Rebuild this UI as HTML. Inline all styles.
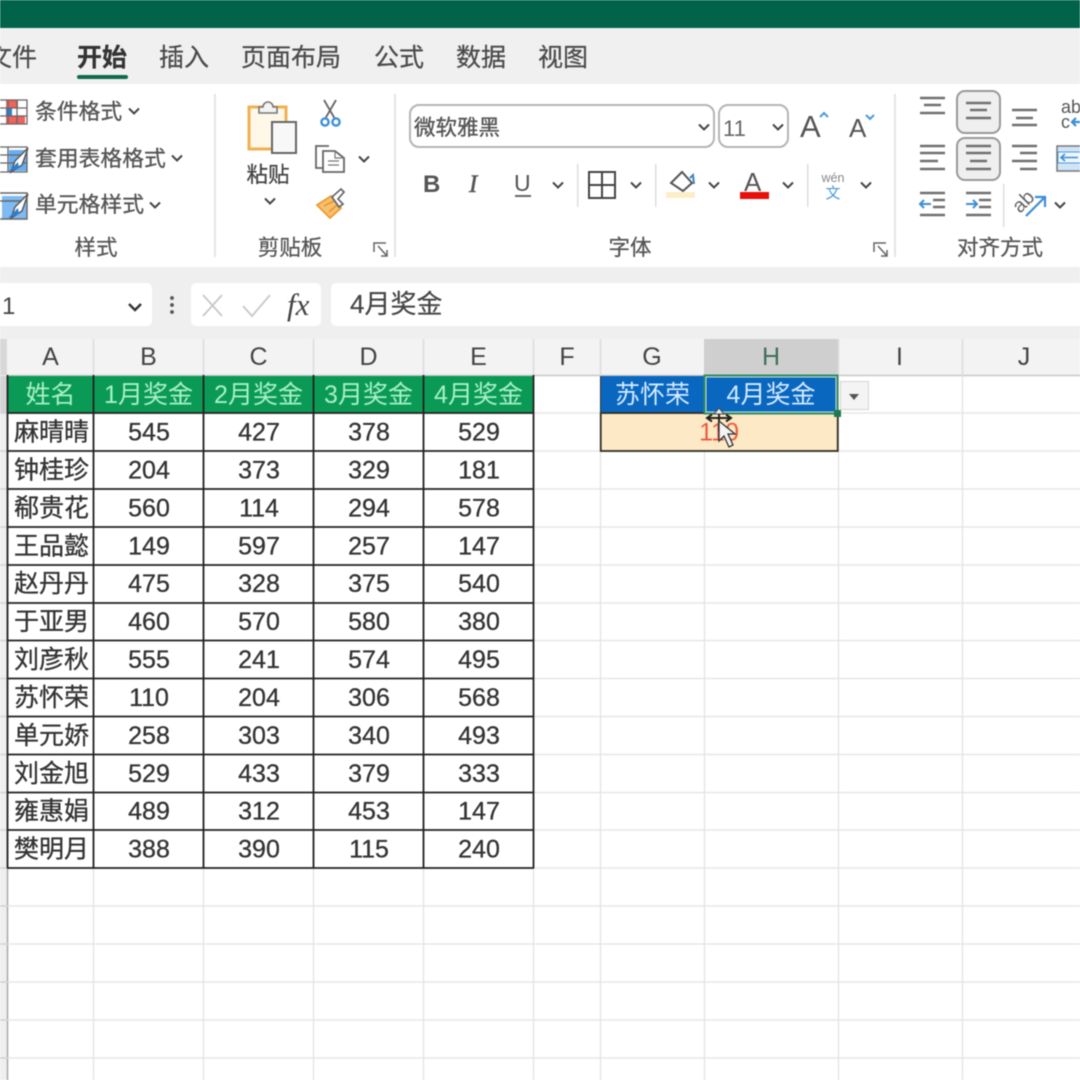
<!DOCTYPE html>
<html lang="zh-CN"><head><meta charset="utf-8"><title>Excel</title>
<style>
html,body{margin:0;padding:0;width:1080px;height:1080px;overflow:hidden;background:#fff}
svg{display:block;filter:blur(.55px)}
text{font-family:"Liberation Sans","Noto Sans CJK SC",sans-serif}
.tab{font-size:25px;fill:#4a4a4a;stroke:#4a4a4a;stroke-width:.25}
.rb{font-size:21.8px;fill:#555;stroke:#555;stroke-width:.3}
.grp{font-size:21.500px;fill:#555;stroke:#555;stroke-width:.25;text-anchor:middle}
.col{font-size:25px;fill:#444;text-anchor:middle}
.n{font-size:25px;fill:#333;stroke:#333;stroke-width:.3;text-anchor:middle}
.h{font-size:25px;fill:#a8f0c8;text-anchor:middle}
.w{font-size:25px;fill:#d4ebff;text-anchor:middle}
.ch{fill:none;stroke:#444;stroke-width:2}
.bar{stroke:#707070;stroke-width:2.4}
</style></head><body>
<svg width="1080" height="1080" viewBox="0 0 1080 1080" xmlns="http://www.w3.org/2000/svg">
<defs><path id="c" class="ch" d="M-5-2.5 0 2.5 5-2.5"/></defs>
<rect width="1080" height="1080" fill="#fff"/>
<!-- title / tabs -->
<rect width="1080" height="28" fill="#01634a"/>
<rect y="28" width="1080" height="56" fill="#f0f0f0"/>
<text class="tab" x="-13" y="66">文件</text>
<text class="tab" x="77" y="66" style="font-weight:700;fill:#333;stroke:#333">开始</text>
<rect x="77" y="75" width="51" height="4" rx="2" fill="#0f6b4e"/>
<text class="tab" x="159" y="66">插入</text>
<text class="tab" x="241" y="66">页面布局</text>
<text class="tab" x="374" y="66">公式</text>
<text class="tab" x="456" y="66">数据</text>
<text class="tab" x="538" y="66">视图</text>
<!-- ribbon -->
<rect y="84" width="1080" height="183" fill="#fff"/>
<g fill="#e4e4e4"><rect x="214" y="94" width="2" height="163"/><rect x="394" y="94" width="2" height="163"/><rect x="894" y="94" width="2" height="163"/></g>
<!-- styles -->
<g>
<rect x="0" y="100" width="27" height="24" fill="#fff"/>
<rect x="6" y="100" width="12" height="8" fill="#f0625a"/><rect x="6" y="116" width="19" height="8" fill="#f0625a"/><rect x="6" y="108" width="6" height="8" fill="#2f7fd0"/>
<path d="M-1 100H27V124H-1M8 100V124M17 100V124M-1 108H27M-1 116H27" fill="none" stroke="#666" stroke-width="1.3"/>
<rect x="9" y="150" width="18" height="21" fill="#6aaef0"/>
<path d="M-1 147H27V172H-1M8 147V172M-1 155H27M-1 163H27" fill="none" stroke="#666" stroke-width="1.3"/>
<path d="M28 148 15 161 11 172 22 165Z" fill="#fff" stroke="#555" stroke-width="1.4"/><path d="M18 162 8 172 19 168Z" fill="#2f7fd0"/>
<rect x="2" y="196" width="25" height="23" fill="#7fbaf3"/>
<path d="M-1 193H27V219H-1M-1 201H27" fill="none" stroke="#666" stroke-width="1.4"/>
<path d="M28 194 15 207 11 218 22 211Z" fill="#fff" stroke="#555" stroke-width="1.4"/><path d="M18 208 8 218 19 214Z" fill="#2f7fd0"/>
</g>
<text class="rb" x="35" y="119">条件格式</text><use href="#c" x="134" y="111"/>
<text class="rb" x="35" y="166">套用表格格式</text><use href="#c" x="177" y="158"/>
<text class="rb" x="35" y="212">单元格样式</text><use href="#c" x="155" y="205"/>
<text class="grp" x="96" y="255">样式</text>
<!-- clipboard -->
<rect x="249" y="107" width="37" height="42" fill="#fff7e8" stroke="#f2b050" stroke-width="3"/>
<path d="M259 113V107H263A5 5 0 0 1 273 107H277V113Z" fill="#f4f4f4" stroke="#777" stroke-width="1.6"/>
<rect x="272" y="122" width="24" height="31" fill="#f8f8f8" stroke="#666" stroke-width="2"/>
<text class="grp" x="268" y="182" style="fill:#444;stroke:#444">粘贴</text><use href="#c" x="270" y="201"/>
<path d="M324 100 335 119M336 100 325 119" stroke="#666" stroke-width="1.8"/>
<circle cx="325" cy="122" r="3.6" fill="none" stroke="#3d8fd8" stroke-width="2.4"/><circle cx="336" cy="122" r="3.6" fill="none" stroke="#3d8fd8" stroke-width="2.4"/>
<path d="M328 168H316V146H329" fill="none" stroke="#666" stroke-width="1.8"/>
<path d="M323 151H335L344 158V172H323Z" fill="#fff" stroke="#666" stroke-width="1.8"/><path d="M328 161H339M328 165H339M335 151V158H344" fill="none" stroke="#777" stroke-width="1.2"/>
<use href="#c" x="364" y="159"/>
<path d="M317 205 331 196 341 208 330 218Z" fill="#f6c070" stroke="#ee9a2e" stroke-width="1.8"/><path d="M324 206 334 201M329 212 337 205" stroke="#e89020" stroke-width="1.4"/>
<path d="M332 197 341 189 344 192 338 199 343 204 339 207Z" fill="#fff" stroke="#666" stroke-width="1.700"/>
<text class="grp" x="290" y="255">剪贴板</text>
<path d="M374 252V243H386M378 246 387 256M387 250V256H381" fill="none" stroke="#666" stroke-width="1.5"/>
<!-- font -->
<rect x="410" y="105" width="304" height="42" rx="9" fill="#fff" stroke="#b4b4b4" stroke-width="2"/>
<rect x="719" y="105" width="69" height="42" rx="9" fill="#fff" stroke="#b4b4b4" stroke-width="2"/>
<text x="414" y="135" style="font-size:21.5px;fill:#555;stroke:#555;stroke-width:.35">微软雅黑</text><use href="#c" x="704" y="127"/>
<text x="723" y="136" style="font-size:22px;fill:#666">11</text><use href="#c" x="778" y="127"/>
<text x="800" y="137" style="font-size:31px;fill:#555">A</text><path d="M820 117 824 113 828 117" fill="none" stroke="#4a9ad8" stroke-width="2"/>
<text x="849" y="137" style="font-size:26px;fill:#555">A</text><path d="M866 115 870 119 874 115" fill="none" stroke="#4a9ad8" stroke-width="2"/>
<text x="423" y="192" style="font-size:24px;font-weight:700;fill:#555">B</text>
<text x="469" y="192" style="font-size:25px;font-style:italic;font-family:'Liberation Serif',serif;fill:#555;stroke:#555;stroke-width:.5">I</text>
<text x="514" y="191" style="font-size:23px;fill:#555">U</text><rect x="515" y="195" width="16" height="2" fill="#666"/>
<use href="#c" x="558" y="185"/>
<rect x="577" y="164" width="1.5" height="43" fill="#dedede"/>
<path d="M589 172H615V198H589ZM602 172V198M589 185H615" fill="none" stroke="#444" stroke-width="2"/>
<use href="#c" x="636" y="185"/>
<rect x="655" y="164" width="1.5" height="43" fill="#dedede"/>
<path d="M671 183 682 172 692 183 683 191Z" fill="#fff" stroke="#555" stroke-width="2"/><path d="M690 178 693 175 694 184" fill="none" stroke="#3c85c9" stroke-width="2"/>
<rect x="666" y="192" width="29" height="6" fill="#fbeec9"/>
<use href="#c" x="714" y="185"/>
<text x="744" y="191" style="font-size:26px;fill:#555">A</text><rect x="740" y="192" width="29" height="7" fill="#e8100a"/>
<use href="#c" x="788" y="185"/>
<rect x="807" y="164" width="1.5" height="43" fill="#dedede"/>
<text x="833" y="182" style="font-size:12.5px;fill:#888;text-anchor:middle">wén</text>
<text x="833" y="198" style="font-size:15px;fill:#4a9ad8;text-anchor:middle">文</text>
<use href="#c" x="866" y="185"/>
<text class="grp" x="630" y="255">字体</text>
<path d="M874 252V243H886M878 246 887 256M887 250V256H881" fill="none" stroke="#666" stroke-width="1.5"/>
<!-- align -->
<rect x="957" y="91" width="43" height="42" rx="8" fill="#efefef" stroke="#999" stroke-width="2"/>
<rect x="957" y="138" width="43" height="42" rx="8" fill="#efefef" stroke="#999" stroke-width="2"/>
<path class="bar" d="M920 98H945M924 105H941M920 113H945M966 103H991M970 110H987M966 118H991M1012 110H1037M1016 118H1033M1012 125H1037M920 146H945M920 153H945M920 161H938M920 169H945M966 146H991M966 153H991M970 161H987M966 169H991M1012 146H1037M1020 153H1037M1012 161H1037M1020 169H1037" fill="none"/>
<path class="bar" d="M920 193H945M933 200H945M933 207H945M920 215H945M966 193H991M979 200H991M979 207H991M966 215H991" fill="none"/>
<path d="M931 204H920M924 200 920 204 924 208" fill="none" stroke="#3c8ed4" stroke-width="2"/>
<path d="M966 204H977M973 200 977 204 973 208" fill="none" stroke="#3c8ed4" stroke-width="2"/>
<rect x="1003" y="184" width="1.5" height="43" fill="#dedede"/>
<text x="0" y="0" transform="translate(1020 214) rotate(-45)" style="font-size:20px;fill:#666">ab</text>
<path d="M1026 216 1044 198M1035 197H1045V207" fill="none" stroke="#3c8ed4" stroke-width="2.2"/>
<use href="#c" x="1060" y="205"/>
<text x="1061" y="113" style="font-size:18px;fill:#555">ab</text><text x="1061" y="128" style="font-size:18px;fill:#555">c</text>
<path d="M1080 122H1072M1076 118 1072 122 1076 126" fill="none" stroke="#3c8ed4" stroke-width="2.2"/>
<rect x="1057" y="146" width="26" height="25" fill="#cfe4f7" stroke="#777" stroke-width="1.5"/><rect x="1058" y="152" width="24" height="11" fill="#eef6fd" stroke="#4a9ad8" stroke-width="1"/>
<path d="M1062 157.500H1078M1065 154 1061 157.500 1065 161" fill="none" stroke="#3c8ed4" stroke-width="1.6"/>
<text class="grp" x="1000" y="255">对齐方式</text>
<!-- formula bar -->
<rect y="267" width="1080" height="72" fill="#efefef"/>
<rect x="-10" y="283" width="162" height="43" rx="5" fill="#fff"/>
<text x="2" y="314" style="font-size:24px;fill:#444">1</text>
<path d="M129 304 135 310 141 304" fill="none" stroke="#333" stroke-width="2.4"/>
<circle cx="172" cy="298" r="1.900" fill="#555"/><circle cx="172" cy="305" r="1.900" fill="#555"/><circle cx="172" cy="312" r="1.900" fill="#555"/>
<rect x="191" y="283" width="130" height="43" rx="5" fill="#fff"/>
<path d="M203 295 222 316M222 295 203 316" stroke="#c8c8c8" stroke-width="1.8"/>
<path d="M243 306 252 316 270 295" fill="none" stroke="#c8c8c8" stroke-width="1.800"/>
<text x="287" y="315" style="font-family:'Liberation Serif',serif;font-style:italic;font-size:31px;fill:#444">fx</text>
<rect x="331" y="283" width="760" height="43" rx="5" fill="#fff"/>
<text x="350" y="313" style="font-size:26px;fill:#444;stroke:#444;stroke-width:.2">4月奖金</text>
<!-- column headers -->
<rect y="339" width="1080" height="36" fill="#f3f3f3"/>
<rect x="704" y="339" width="134" height="36" fill="#cfcfcf"/>
<rect y="339" width="7" height="36" fill="#d8d8d8"/>
<path d="M93.500 339V375M203.500 339V375M313.500 339V375M423.500 339V375M533.500 339V375M600.500 339V375M962.500 339V375M838.500 339V375" stroke="#dcdcdc" stroke-width="1.500"/>
<path d="M0 375.500H1080" stroke="#c8c8c8" stroke-width="1.500"/>
<text class="col" x="50.500" y="365">A</text><text class="col" x="148.500" y="365">B</text><text class="col" x="258.500" y="365">C</text><text class="col" x="368.500" y="365">D</text><text class="col" x="478.500" y="365">E</text><text class="col" x="567" y="365">F</text><text class="col" x="652" y="365">G</text><text class="col" x="771" y="365" style="fill:#3f6f5a">H</text><text class="col" x="899.500" y="365">I</text><text class="col" x="1024" y="365">J</text>
<!-- row header strip -->
<rect y="375" width="7" height="705" fill="#efefef"/><rect y="376" width="7" height="37" fill="#d4d4d4"/>
<path d="M7.500 375V1080" stroke="#a8a8a8" stroke-width="1.500"/>
<!-- grid -->
<path d="M93.500 869V1080M203.500 869V1080M313.500 869V1080M423.500 869V1080M533.500 375V1080M600.500 375V1080M704.500 451V1080M838.500 375V1080M962.500 375V1080" stroke="#e3e3e3" stroke-width="1.300"/>
<path d="M534 413H1080M534 451H1080M534 489H1080M534 527H1080M534 565H1080M534 603H1080M534 640.500H1080M534 678.500H1080M534 716.500H1080M534 754.500H1080M534 792.500H1080M534 830H1080M0 868H1080M0 906H1080M0 944H1080M0 982H1080M0 1020H1080M0 1058H1080" stroke="#e3e3e3" stroke-width="1.300"/>
<path d="M0 413H7M0 451H7M0 489H7M0 527H7M0 565H7M0 603H7M0 640.500H7M0 678.500H7M0 716.500H7M0 754.500H7M0 792.500H7M0 830H7M0 868H7M0 906H7M0 944H7M0 982H7M0 1020H7M0 1058H7" stroke="#cfcfcf" stroke-width="1.300"/>
<!-- data table -->
<rect x="7" y="376" width="527" height="37" fill="#0b9a55"/>
<path d="M7.500 375V868M93.500 375V868M203.500 375V868M313.500 375V868M423.500 375V868M533.500 375V868" stroke="#222" stroke-width="1.800"/>
<path d="M7 413H534M7 451H534M7 489H534M7 527H534M7 565H534M7 603H534M7 640.500H534M7 678.500H534M7 716.500H534M7 754.500H534M7 792.500H534M7 830H534M7 868H534" stroke="#222" stroke-width="1.800"/>
<text class="h" x="50.500" y="403">姓名</text><text class="h" x="148.500" y="403">1月奖金</text><text class="h" x="258.500" y="403">2月奖金</text><text class="h" x="368.500" y="403">3月奖金</text><text class="h" x="478.500" y="403">4月奖金</text>
<g class="d">
<text class="n" x="51.500" y="440.500">麻晴晴</text><text class="n" x="149" y="440.500">545</text><text class="n" x="259" y="440.500">427</text><text class="n" x="369" y="440.500">378</text><text class="n" x="479" y="440.500">529</text>
<text class="n" x="51.500" y="478.400">钟桂珍</text><text class="n" x="149" y="478.400">204</text><text class="n" x="259" y="478.400">373</text><text class="n" x="369" y="478.400">329</text><text class="n" x="479" y="478.400">181</text>
<text class="n" x="51.500" y="516.300">郗贵花</text><text class="n" x="149" y="516.300">560</text><text class="n" x="259" y="516.300">114</text><text class="n" x="369" y="516.300">294</text><text class="n" x="479" y="516.300">578</text>
<text class="n" x="51.500" y="554.300">王品懿</text><text class="n" x="149" y="554.300">149</text><text class="n" x="259" y="554.300">597</text><text class="n" x="369" y="554.300">257</text><text class="n" x="479" y="554.300">147</text>
<text class="n" x="51.500" y="592.200">赵丹丹</text><text class="n" x="149" y="592.200">475</text><text class="n" x="259" y="592.200">328</text><text class="n" x="369" y="592.200">375</text><text class="n" x="479" y="592.200">540</text>
<text class="n" x="51.500" y="630.100">于亚男</text><text class="n" x="149" y="630.100">460</text><text class="n" x="259" y="630.100">570</text><text class="n" x="369" y="630.100">580</text><text class="n" x="479" y="630.100">380</text>
<text class="n" x="51.500" y="668">刘彦秋</text><text class="n" x="149" y="668">555</text><text class="n" x="259" y="668">241</text><text class="n" x="369" y="668">574</text><text class="n" x="479" y="668">495</text>
<text class="n" x="51.500" y="706">苏怀荣</text><text class="n" x="149" y="706">110</text><text class="n" x="259" y="706">204</text><text class="n" x="369" y="706">306</text><text class="n" x="479" y="706">568</text>
<text class="n" x="51.500" y="743.900">单元娇</text><text class="n" x="149" y="743.900">258</text><text class="n" x="259" y="743.900">303</text><text class="n" x="369" y="743.900">340</text><text class="n" x="479" y="743.900">493</text>
<text class="n" x="51.500" y="781.800">刘金旭</text><text class="n" x="149" y="781.800">529</text><text class="n" x="259" y="781.800">433</text><text class="n" x="369" y="781.800">379</text><text class="n" x="479" y="781.800">333</text>
<text class="n" x="51.500" y="819.700">雍惠娟</text><text class="n" x="149" y="819.700">489</text><text class="n" x="259" y="819.700">312</text><text class="n" x="369" y="819.700">453</text><text class="n" x="479" y="819.700">147</text>
<text class="n" x="51.500" y="857.600">樊明月</text><text class="n" x="149" y="857.600">388</text><text class="n" x="259" y="857.600">390</text><text class="n" x="369" y="857.600">115</text><text class="n" x="479" y="857.600">240</text>
</g>
<!-- lookup -->
<rect x="600" y="376" width="238" height="37" fill="#0a67c0"/>
<rect x="600.750" y="413" width="237" height="38" fill="#fde9c5" stroke="#2e2e22" stroke-width="1.800"/>
<path d="M600.500 376V413" stroke="#333" stroke-width="1"/>
<text class="w" x="652.500" y="403">苏怀荣</text><text class="w" x="771" y="403">4月奖金</text>
<text x="719" y="440.500" style="font-size:25px;fill:#ec5a40;text-anchor:middle">110</text>
<rect x="704.500" y="375.500" width="133" height="38" fill="none" stroke="#2f8a62" stroke-width="2"/>
<rect x="706" y="377" width="130" height="35" fill="none" stroke="#cfe6da" stroke-width="1"/>
<rect x="834" y="410" width="7" height="7" fill="#1d7a50"/>
<rect x="840.500" y="381.500" width="28" height="28" fill="#f4f4f4" stroke="#d4d4d4"/>
<path d="M849 394H859L854 400Z" fill="#555"/>
<!-- cursor -->
<path d="M707 418H731M712 414.500 707 418 712 421.500M726 414.500 731 418 726 421.500M719 411V431" fill="none" stroke="#222" stroke-width="2"/>
<path d="M719 408 714 414H724Z" fill="#dff0f8" stroke="#444"/>
<path d="M719 421V441L724 436 729 447 733 445 728 434 735 434Z" fill="#f4f4f4" stroke="#333" stroke-width="1.300"/>
</svg>
</body></html>
